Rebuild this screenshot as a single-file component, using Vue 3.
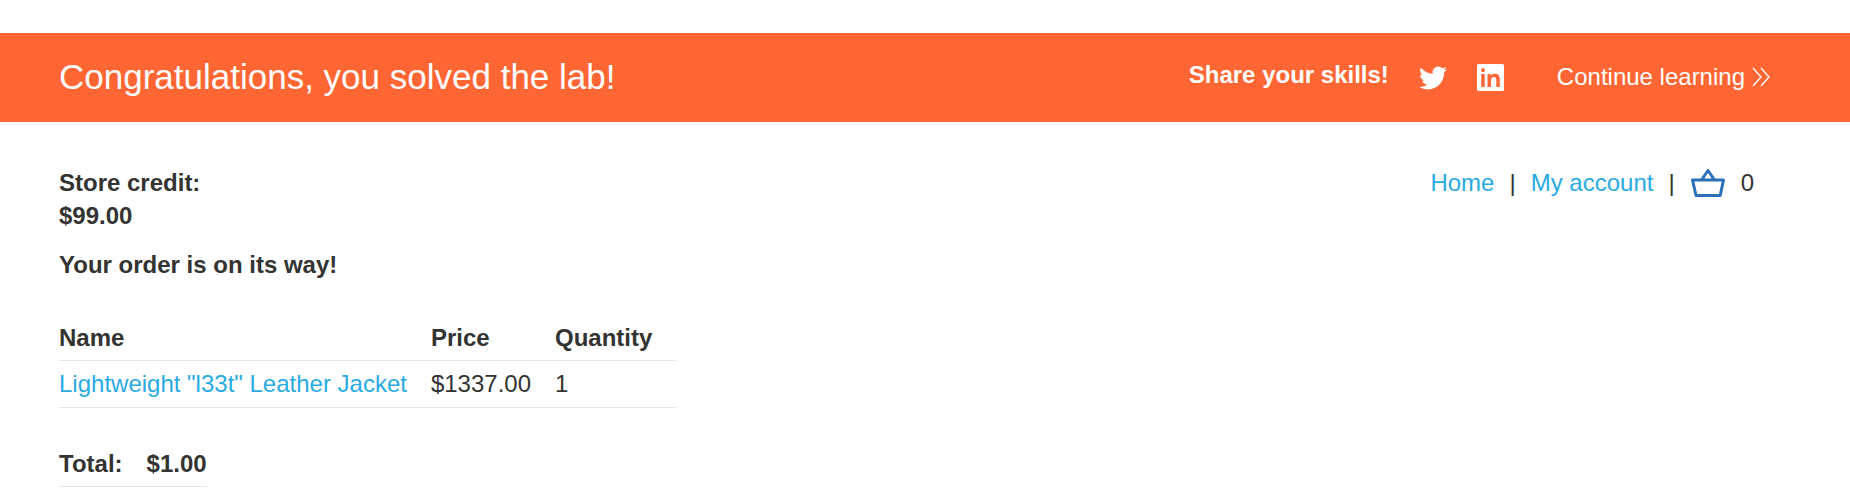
<script setup>
const items = [{ name: 'Lightweight "l33t" Leather Jacket', price: '$1337.00', quantity: 1 }]
</script>

<template>
  <div class="page">
    <header class="banner">
      <h1>Congratulations, you solved the lab!</h1>
      <div class="actions">
        <span class="share">Share your skills!</span>
        <a class="social" href="#" aria-label="Share on Twitter">
          <svg width="28" height="28" viewBox="0 0 24 24" fill="#fff"><path d="M23.95 4.57a10 10 0 0 1-2.82.77 4.96 4.96 0 0 0 2.16-2.72c-.95.55-2 .96-3.13 1.18a4.92 4.92 0 0 0-8.38 4.48C7.69 8.1 4.07 6.13 1.64 3.16a4.82 4.82 0 0 0-.67 2.48c0 1.71.87 3.21 2.19 4.1a4.9 4.9 0 0 1-2.23-.62v.06a4.92 4.92 0 0 0 3.95 4.83 5 5 0 0 1-2.21.08 4.94 4.94 0 0 0 4.6 3.42A9.87 9.87 0 0 1 0 19.54a13.99 13.99 0 0 0 7.55 2.21c9.05 0 14-7.5 14-13.98 0-.21 0-.42-.02-.63a9.94 9.94 0 0 0 2.46-2.55z" /></svg>
        </a>
        <a class="social" href="#" aria-label="Share on LinkedIn">
          <svg width="28" height="28" viewBox="0 0 28 28"><rect width="27" height="27" rx="1.5" fill="#fff" /><g fill="#f63"><rect x="4.3" y="10" width="3.4" height="13" /><circle cx="6" cy="6.300" r="2" /><path d="M10.500 10h3.300v1.800c.6-1.100 2-2.100 4-2.100 4.100 0 5 2.600 5 6.100V23h-3.500v-6.300c0-1.600 0-3.800-2.400-3.800s-2.900 1.800-2.900 3.700V23h-3.500z" /></g></svg>
        </a>
        <a class="continue" href="#">Continue learning
          <svg width="18" height="20" viewBox="0 0 18 20" fill="none" stroke="#fff" stroke-width="1.300"><path d="M1 1l8 9-8 9M9 1l8 9-8 9" /></svg>
        </a>
      </div>
    </header>

    <main>
      <div class="top">
        <p class="credit"><strong>Store credit:<br>$99.00</strong></p>
        <nav>
          <a href="#">Home</a><span>|</span><a href="#">My account</a><span>|</span>
          <a href="#" aria-label="Basket">
            <svg width="36" height="30" viewBox="0 0 36 30" fill="none" stroke="#2b71b8" stroke-width="3" stroke-linejoin="round"><path d="M2.500 12h31l-3.300 15.500H6zM11.500 12l6.500-9.500 6.500 9.500" /></svg>
          </a>
          <span>0</span>
        </nav>
      </div>
      <p class="status"><strong>Your order is on its way!</strong></p>
      <table class="items">
        <thead>
          <tr><th>Name</th><th>Price</th><th>Quantity</th></tr>
        </thead>
        <tbody>
          <tr v-for="item in items" :key="item.name">
            <td><a href="#">{{ item.name }}</a></td><td>{{ item.price }}</td><td>{{ item.quantity }}</td>
          </tr>
        </tbody>
      </table>
      <table class="total">
        <tbody>
          <tr><th scope="row">Total:</th><th>$1.00</th></tr>
        </tbody>
      </table>
    </main>
  </div>
</template>

<style>
body {
  margin: 0;
  background: #fff;
}
</style>

<style scoped>
.page {
  padding-top: 33px;
  font-family: "Liberation Sans", Arial, sans-serif;
  font-size: 24px;
  line-height: 33px;
  color: #333332;
}
a {
  color: #29abe2;
  text-decoration: none;
}
svg {
  display: block;
}
p {
  margin: 0;
}
.banner {
  display: flex;
  justify-content: space-between;
  align-items: center;
  padding: 22px 80px 23px 59px;
  background: #f63;
  color: #fff;
}
h1 {
  margin: 0;
  font-size: 35px;
  line-height: 44px;
  font-weight: 400;
}
.actions {
  display: flex;
  align-items: center;
}
.share {
  padding-bottom: 6px;
  font-weight: 700;
}
.social {
  margin-left: 30px;
  padding-top: 2px;
}
.continue {
  display: flex;
  align-items: center;
  gap: 7px;
  margin-left: 52px;
  padding-bottom: 1px;
  color: #fff;
}
main {
  padding: 44px 96px 0 59px;
}
.top {
  display: flex;
  justify-content: space-between;
  align-items: flex-start;
}
nav {
  display: flex;
  align-items: center;
  gap: 15px;
}
.status {
  margin-top: 16px;
}
table {
  border-collapse: separate;
  border-spacing: 0;
}
.items {
  margin-top: 33px;
}
.total {
  margin-top: 32px;
}
th,
td {
  border-bottom: 1px solid #e5e5e5;
  text-align: left;
}
th {
  padding: 7px 24px 6px 0;
}
td {
  padding: 6px 24px 7px 0;
}
.total th:last-child {
  padding-right: 0;
}
</style>
